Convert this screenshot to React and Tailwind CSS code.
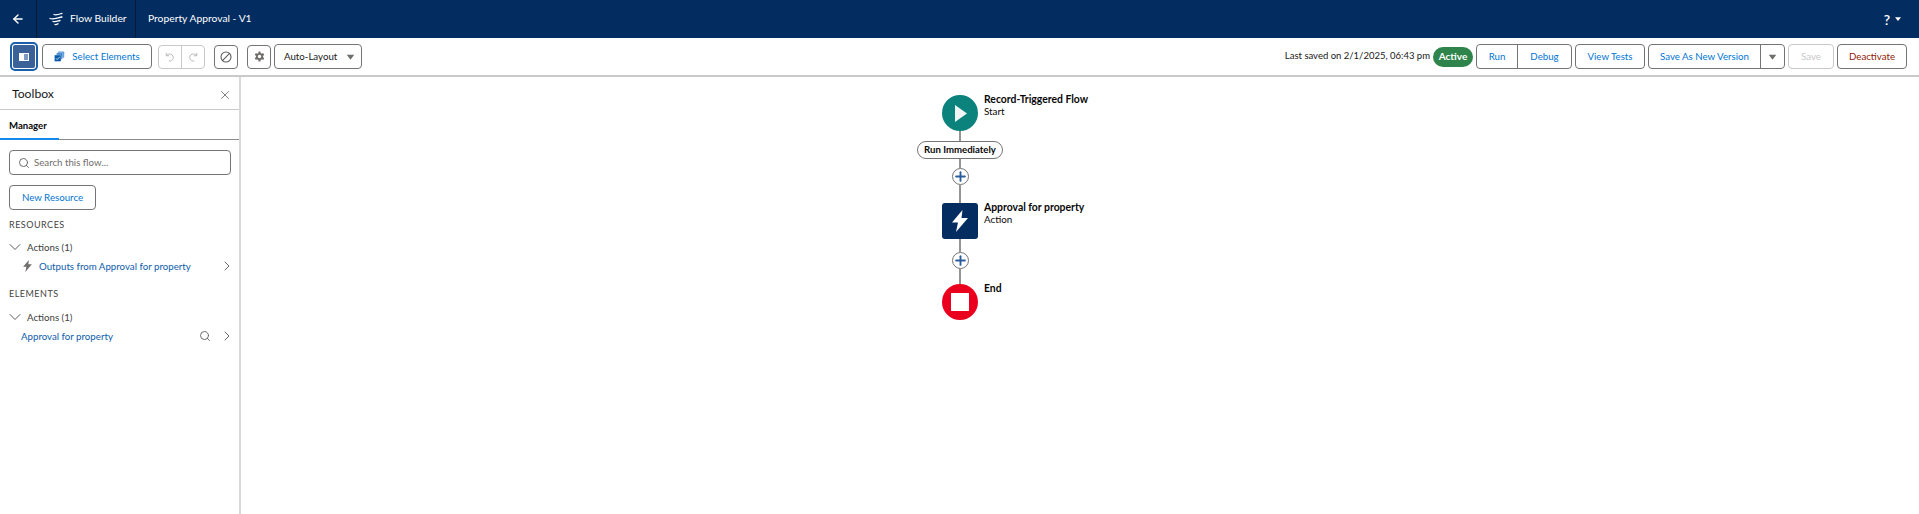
import React from 'react';
import { ArrowLeft, Ban, Search, X, ChevronDown, ChevronRight, Plus } from 'lucide-react';

const box = 'h-[25px] flex items-center bg-white border border-[#747474] rounded-[4px] whitespace-nowrap';
const btn = `${box} justify-center text-[#0176d3]`;

const Caret = ({ className = '' }) => (
  <svg viewBox="0 0 12 8" className={className} fill="#706e6b">
    <path d="M1 1h10L6 7.5z" />
  </svg>
);

const FlowLogo = () => (
  <svg viewBox="0 0 14 14" className="w-[14px] h-[14px]" fill="none" stroke="#fff" strokeWidth="1.3" strokeLinecap="round">
    <path d="M5 2.500c2.500 1 5 -0.200 8 -1.200" />
    <path d="M1 6.500c3 1.200 7 -0.500 12 -1.500" />
    <path d="M4 9.500c2.500 0.800 4.500 -0.300 7 -1" />
    <path d="M6 12.500c1 0.300 2 0 3 -0.800" />
  </svg>
);

const Gear = () => (
  <svg viewBox="0 0 20 20" className="w-[11px] h-[11px]">
    <g fill="#706e6b">
      <circle cx="10" cy="10" r="6.500" />
      <rect x="8" y="1" width="4" height="18" rx="1" />
      <rect x="8" y="1" width="4" height="18" rx="1" transform="rotate(60 10 10)" />
      <rect x="8" y="1" width="4" height="18" rx="1" transform="rotate(120 10 10)" />
    </g>
    <circle cx="10" cy="10" r="3" fill="#fff" />
  </svg>
);

const UndoIcon = ({ flip = false }) => (
  <svg viewBox="0 0 12 12" className={`w-[10px] h-[10px] ${flip ? '-scale-x-100' : ''}`} fill="none" stroke="#b5b5b5" strokeWidth="1.1">
    <path d="M1.500 1v3.500H5" />
    <path d="M1.500 4.500C3 2.500 5 2 7 2.600c2.500 0.900 3.500 3.400 2.700 5.600C9 10 7 11.200 4.500 10.800" />
  </svg>
);

const AddButton = () => (
  <div className="w-[17px] h-[17px] rounded-full bg-white border border-[#747474] flex items-center justify-center shrink-0">
    <Plus size={15} strokeWidth={3} className="text-[#2a5d9c]" />
  </div>
);

const Line = ({ h }) => <div className={`w-[2px] bg-[#969492] shrink-0 ${h}`} />;

const NodeLabel = ({ title, sub }) => (
  <div className="absolute left-[42px] top-[-2px] whitespace-nowrap leading-[12px] text-[#080707]">
    <div className="font-bold text-[10.4px]">{title}</div>
    {sub && <div className="text-[9.8px]">{sub}</div>}
  </div>
);

const SectionRow = ({ children, className = '' }) => (
  <div className={`flex items-center ${className}`}>{children}</div>
);

const Toolbox = () => (
  <aside className="w-[241px] shrink-0 border-r-2 border-[#d8d8d8] flex flex-col">
    <div className="h-[33px] border-b border-[#c9c9c9] flex items-center justify-between pl-[12px] pr-[7px] pt-[3px] shrink-0">
      <span className="text-[12.2px] text-[#181818]">Toolbox</span>
      <X size={14} strokeWidth={1.5} className="text-[#706e6b]" />
    </div>
    <div className="h-[30px] border-b border-[#8a8a8a] relative shrink-0">
      <div className="h-[30px] w-[59px] border-b-2 border-[#1589ee] pl-[9px] pt-[8px] text-[9.6px] font-bold text-[#080707] leading-[16px]">Manager</div>
    </div>
    <div className="pl-[9px] pr-[8px] pt-[10px]">
      <div className="h-[25px] border border-[#747474] rounded-[4px] flex items-center pl-[8px] gap-[4px] text-[#706e6b]">
        <Search size={12} strokeWidth={1.8} className="text-[#5c5c5c]" />
        <span>Search this flow...</span>
      </div>
      <div className={`${btn} w-[87px] mt-[10px]`}>New Resource</div>
      <div className="mt-[8px] h-[14px] leading-[14px] text-[9px] tracking-[0.5px] text-[#444]">RESOURCES</div>
      <SectionRow className="mt-[8px] h-[14px] text-[#3e3e3c]">
        <ChevronDown size={20} strokeWidth={1.2} className="text-[#5c5c5c] ml-[-4px] mr-[2px] shrink-0" />
        <span>Actions (1)</span>
      </SectionRow>
      <SectionRow className="mt-[5px] h-[14px] pl-[14px]">
        <svg viewBox="0 0 16 22" className="w-[9px] h-[12px] mr-[7px]" fill="#706e6b"><path d="M10.500 0 0 12.500h6L4 22 16 8H9.500z" /></svg>
        <span className="text-[#0b5cab] whitespace-nowrap">Outputs from Approval for property</span>
        <ChevronRight size={16} strokeWidth={1.4} className="text-[#5c5c5c] ml-auto mr-[-4px]" />
      </SectionRow>
      <div className="mt-[14px] h-[14px] leading-[14px] text-[9px] tracking-[0.5px] text-[#444]">ELEMENTS</div>
      <SectionRow className="mt-[9px] h-[14px] text-[#3e3e3c]">
        <ChevronDown size={20} strokeWidth={1.2} className="text-[#5c5c5c] ml-[-4px] mr-[2px] shrink-0" />
        <span>Actions (1)</span>
      </SectionRow>
      <SectionRow className="mt-[5px] h-[14px] pl-[12px]">
        <span className="text-[#0b5cab] whitespace-nowrap">Approval for property</span>
        <Search size={12} strokeWidth={1.8} className="text-[#5c5c5c] ml-auto mr-[8px]" />
        <ChevronRight size={16} strokeWidth={1.4} className="text-[#5c5c5c] mr-[-4px]" />
      </SectionRow>
    </div>
  </aside>
);

const Canvas = () => (
  <main className="flex-1 flex justify-center pr-[240px] pt-[18px]">
    <div className="flex flex-col items-center w-[86px]">
      <div className="relative w-[36px] h-[36px] rounded-full bg-[#0b827c] flex items-center justify-center shrink-0">
        <svg viewBox="0 0 12 17" className="w-[12px] h-[17px] ml-[1px]" fill="#eef5f4"><path d="M0 0l12 8.500L0 17z" /></svg>
        <NodeLabel title="Record-Triggered Flow" sub="Start" />
      </div>
      <Line h="h-[10px]" />
      <div className="w-[86px] h-[18px] rounded-full border border-[#747474] bg-white flex items-center justify-center text-[9.6px] font-bold text-[#080707] whitespace-nowrap shrink-0">Run Immediately</div>
      <Line h="h-[9px]" />
      <AddButton />
      <Line h="h-[18px]" />
      <div className="relative w-[36px] h-[36px] rounded-[3px] bg-[#032d60] flex items-center justify-center shrink-0">
        <svg viewBox="0 0 16 22" className="w-[16px] h-[22px]" fill="#fff"><path d="M10.500 0 0 12.500h6L4 22 16 8H9.500z" /></svg>
        <NodeLabel title="Approval for property" sub="Action" />
      </div>
      <Line h="h-[13px]" />
      <AddButton />
      <Line h="h-[15px]" />
      <div className="relative w-[36px] h-[36px] rounded-full bg-[#ea001e] flex items-center justify-center shrink-0">
        <div className="w-[18px] h-[18px] bg-white" />
        <NodeLabel title="End" />
      </div>
    </div>
  </main>
);

export default function App() {
  return (
    <div className="w-[1919px] h-[514px] bg-white flex flex-col overflow-hidden font-['Lato','Open_Sans',sans-serif] text-[9.7px]">
      <header className="h-[38px] bg-[#032d60] text-white flex items-center shrink-0 text-[10.3px]">
        <div className="w-[37px] h-full border-r border-[#0c1a33] flex items-center justify-center">
          <ArrowLeft size={14} strokeWidth={2.4} />
        </div>
        <div className="w-[99px] h-full border-r border-[#0c1a33] flex items-center pl-[12px] gap-[7px]">
          <FlowLogo />
          <span>Flow Builder</span>
        </div>
        <span className="ml-[12px]">Property Approval - V1</span>
        <div className="ml-auto mr-[18px] flex items-center gap-[5px]">
          <span className="text-[14px] font-semibold">?</span>
          <svg viewBox="0 0 8 5" className="w-[6px] h-[4px]" fill="#fff"><path d="M0 0h8L4 5z" /></svg>
        </div>
      </header>

      <div className="h-[39px] border-b-2 border-[#c9c9c9] flex items-center pl-[13px] pr-[12px] shrink-0">
        <div className="w-[22px] h-[23px] rounded-[2px] bg-[#3a6298] outline-2 outline-offset-1 outline-[#1b5fa8] flex items-center justify-center">
          <div className="w-[10px] h-[8px] border border-white flex"><div className="w-[4px] bg-white" /><div className="flex-1 bg-[#7d9ac0]" /></div>
        </div>
        <div className={`${btn} w-[110px] ml-[7px] gap-[7px]`}>
          <svg viewBox="0 0 14 14" className="w-[11px] h-[11px]">
            <rect x="5" y="0.500" width="8" height="8" rx="1" fill="#5b9bd5" />
            <rect x="3" y="2.500" width="8" height="8" rx="1" fill="#2a78c7" stroke="#fff" strokeWidth="0.5" />
            <rect x="0.500" y="5" width="8.500" height="8.500" rx="1" fill="#0b5cab" stroke="#fff" strokeWidth="0.5" />
            <path d="M2.500 9.300l1.500 1.500 3-3" stroke="#fff" strokeWidth="1" fill="none" />
          </svg>
          <span>Select Elements</span>
        </div>
        <div className="w-[47px] h-[24px] ml-[6px] border border-[#c9c9c9] rounded-[4px] flex">
          <div className="flex-1 border-r border-[#c9c9c9] flex items-center justify-center"><UndoIcon /></div>
          <div className="flex-1 flex items-center justify-center"><UndoIcon flip /></div>
        </div>
        <div className={`${btn} w-[24px] !h-[24px] ml-[9px]`}><Ban size={12} strokeWidth={2.2} className="text-[#5c5c5c] -scale-x-100" /></div>
        <div className={`${btn} w-[24px] !h-[24px] ml-[9px]`}><Gear /></div>
        <div className={`${box} w-[88px] ml-[3px] justify-between pl-[9px] pr-[6px] text-[#181818]`}>
          <span>Auto-Layout</span>
          <Caret className="w-[9px] h-[6px]" />
        </div>

        <span className="ml-auto text-[#181818] text-[9.5px] whitespace-nowrap">Last saved on 2/1/2025, 06:43 pm</span>
        <div className="ml-[3px] w-[40px] h-[20px] rounded-full bg-[#2e844a] text-white font-bold text-[10px] flex items-center justify-center">Active</div>
        <div className={`${btn} ml-[3px] w-[96px]`}>
          <span className="w-[41px] h-full border-r border-[#747474] flex items-center justify-center">Run</span>
          <span className="flex-1 text-center">Debug</span>
        </div>
        <div className={`${btn} ml-[3px] w-[70px]`}>View Tests</div>
        <div className={`${btn} ml-[3px] w-[137px]`}>
          <span className="flex-1 h-full border-r border-[#747474] flex items-center justify-center">Save As New Version</span>
          <span className="w-[23px] flex justify-center"><Caret className="w-[9px] h-[6px]" /></span>
        </div>
        <div className="h-[25px] ml-[3px] w-[46px] flex items-center justify-center border border-[#c9c9c9] rounded-[4px] text-[#c9c9c9]">Save</div>
        <div className={`${box} ml-[3px] w-[70px] justify-center text-[#8e1b03]`}>Deactivate</div>
      </div>

      <div className="flex-1 flex min-h-0">
        <Toolbox />
        <Canvas />
      </div>
    </div>
  );
}
